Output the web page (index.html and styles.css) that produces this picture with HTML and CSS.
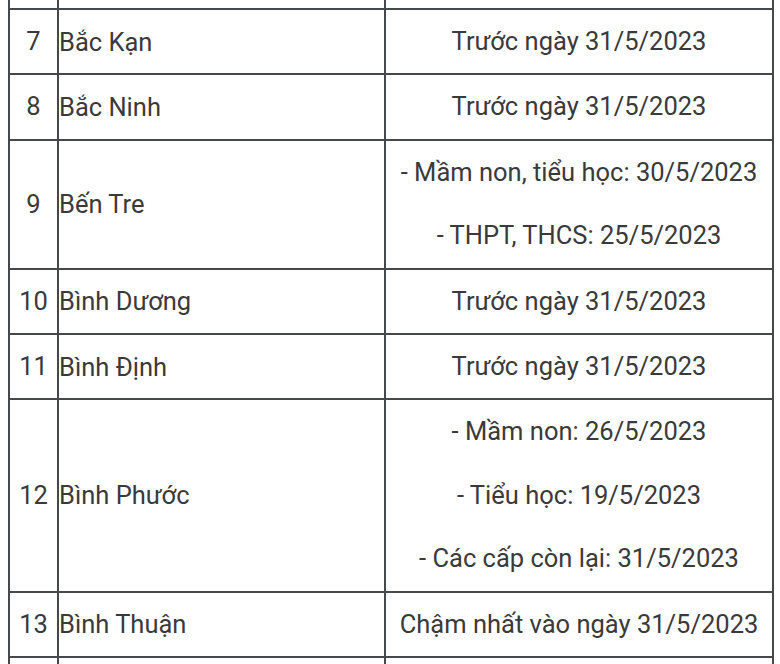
FILE: index.html
```html
<!DOCTYPE html>
<html lang="vi">
<head>
<meta charset="utf-8">
<title>Bảng thời gian</title>
<link rel="stylesheet" href="styles.css">
</head>
<body>
<div class="page">
<table class="grid">
<colgroup><col class="c-no"><col class="c-name"><col class="c-date"></colgroup>
<tbody>
<tr class="stub-top"><td><div class="sp-top"></div></td><td></td><td></td></tr>
<tr><td class="no"><div class="ln">7</div></td><td class="name">Bắc Kạn</td><td class="date"><div class="ln">Trước ngày 31/5/2023</div></td></tr>
<tr><td class="no"><div class="ln">8</div></td><td class="name">Bắc Ninh</td><td class="date"><div class="ln">Trước ngày 31/5/2023</div></td></tr>
<tr><td class="no">9</td><td class="name">Bến Tre</td><td class="date"><div class="ln">- Mầm non, tiểu học: 30/5/2023</div><div class="ln">- THPT, THCS: 25/5/2023</div></td></tr>
<tr><td class="no"><div class="ln">10</div></td><td class="name">Bình Dương</td><td class="date"><div class="ln">Trước ngày 31/5/2023</div></td></tr>
<tr><td class="no"><div class="ln">11</div></td><td class="name">Bình Định</td><td class="date"><div class="ln">Trước ngày 31/5/2023</div></td></tr>
<tr><td class="no">12</td><td class="name">Bình Phước</td><td class="date"><div class="ln">- Mầm non: 26/5/2023</div><div class="ln">- Tiểu học: 19/5/2023</div><div class="ln">- Các cấp còn lại: 31/5/2023</div></td></tr>
<tr><td class="no"><div class="ln">13</div></td><td class="name">Bình Thuận</td><td class="date"><div class="ln">Chậm nhất vào ngày 31/5/2023</div></td></tr>
<tr class="stub-bottom"><td><div class="sp-bottom"></div></td><td></td><td></td></tr>
</tbody>
</table>
</div>
</body>
</html>
```

FILE: styles.css
```css
html, body {
  margin: 0;
  padding: 0;
  background: #ffffff;
}
body {
  font-family: Roboto, "Noto Sans", Arial, sans-serif;
  font-size: 25.5px;
  color: #3a3a3a;
  overflow: hidden;
}
.page {
  padding-left: 8px;
  height: 664px;
  overflow: hidden;
}
.grid {
  border-collapse: collapse;
  table-layout: fixed;
  width: 764px;
}
.c-no { width: 49px; }
.c-name { width: 327px; }
.c-date { width: 388px; }
.grid td {
  border: 2px solid #46494c;
  padding: 0;
  vertical-align: middle;
}
.stub-top td { border-top: none; }
.stub-bottom td { border-bottom: none; }
.sp-top { height: 8px; }
.sp-bottom { height: 40px; }
.ln {
  height: 63.4px;
  line-height: 63.4px;
  white-space: nowrap;
}
.no { text-align: center; }
.name { text-align: left; white-space: nowrap; }
.date { text-align: center; }
```
